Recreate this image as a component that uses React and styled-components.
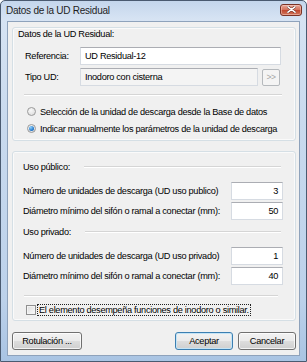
import React from 'react';
import styled, { createGlobalStyle } from 'styled-components';

const GlobalStyle = createGlobalStyle`
  html, body {
    margin: 0;
    padding: 0;
  }
  body {
    width: 307px;
    height: 362px;
    overflow: hidden;
    background: #ffffff;
    font-family: "Liberation Sans", Arial, sans-serif;
    font-size: 9.2px;
    letter-spacing: -0.3px;
    color: #000;
  }
`;

/* ---------- window frame ---------- */
const Window = styled.div`
  box-sizing: border-box;
  width: 307px;
  height: 362px;
  border: 1px solid #4a5a70;
  border-radius: 5px 5px 0 0;
  background: linear-gradient(#c4d6ec 0px, #d6e3f3 18px, #c9daee 120px, #bcd1ea 300px, #a9c4e3 100%);
  display: flex;
  flex-direction: column;
  padding: 0 6px 5px;
`;

const TitleBar = styled.div`
  height: 20px;
  display: flex;
  align-items: center;
  justify-content: space-between;
  margin: 0 -2px 0 -1px;
`;

const Title = styled.span`
  font-size: 10px;
  letter-spacing: -0.25px;
  color: #1e1e1e;
  padding-bottom: 1px;
`;

const CloseButton = styled.div`
  width: 22px;
  height: 12px;
  box-sizing: border-box;
  margin-top: -3px;
  border: 1px solid #7a3326;
  border-radius: 3px;
  background: linear-gradient(#e8a798 0%, #d6755f 45%, #c24a30 55%, #d0765c 100%);
  box-shadow: inset 0 0 0 1px rgba(255, 220, 210, 0.45);
  display: flex;
  align-items: center;
  justify-content: center;
`;

const Client = styled.div`
  flex: 1;
  background: #f0f0f0;
  border: 1px solid #8ea2bb;
  display: flex;
  flex-direction: column;
  padding: 5px 3px 0 4px;
`;

/* ---------- group panels ---------- */
const Group = styled.div`
  border: 1px solid #d5dfe5;
  border-radius: 3px;
  box-shadow: inset 0 0 0 1px #fafafa;
  display: flex;
  flex-direction: column;
  margin-top: ${p => p.$top || 0}px;
  padding-bottom: ${p => p.$bottom || 0}px;
`;

const GroupLabel = styled.div`
  line-height: 12px;
  height: 12px;
  padding-left: 5px;
`;

const SubHeader = styled.div`
  display: flex;
  align-items: center;
  line-height: 12px;
  height: 12px;
  margin-top: ${p => p.$top}px;
  padding: 0 14px 0 10px;

  &::after {
    content: "";
    flex: 1;
    margin-left: 14px;
    border-top: 1px solid #d5d5d5;
    border-bottom: 1px solid #ffffff;
  }
`;

const Separator = styled.div`
  height: 0;
  border-top: 1px solid #d5d5d5;
  border-bottom: 1px solid #ffffff;
  margin: ${p => p.$top}px ${p => p.$right}px 0 11px;
`;

/* ---------- rows and fields ---------- */
const FieldRow = styled.div`
  display: flex;
  align-items: center;
  height: 18px;
  margin-top: ${p => p.$top}px;
  padding-left: ${p => p.$indent || 12}px;
  padding-right: ${p => p.$right || 0}px;
`;

const FieldLabel = styled.span`
  width: ${p => (p.$w ? `${p.$w}px` : 'auto')};
  flex: ${p => (p.$w ? 'none' : 1)};
  white-space: nowrap;
`;

const TextBox = styled.div`
  box-sizing: border-box;
  width: ${p => p.$w}px;
  height: ${p => p.$h || 18}px;
  border: 1px solid #d6dbe2;
  border-top-color: #abadb3;
  background: ${p => (p.$readonly ? '#f4f4f4' : '#ffffff')};
  display: flex;
  align-items: center;
  justify-content: ${p => (p.$right ? 'flex-end' : 'flex-start')};
  padding: 0 4px;
  white-space: nowrap;
`;

const MiniButton = styled.div`
  box-sizing: border-box;
  width: 18px;
  height: 17px;
  margin-left: 4px;
  border: 1px solid #b5b9bd;
  border-radius: 2px;
  background: #f4f4f4;
  color: #a6a6a6;
  font-size: 8.5px;
  display: flex;
  align-items: center;
  justify-content: center;
  letter-spacing: -0.5px;
`;

const RadioList = styled.div`
  display: flex;
  flex-direction: column;
  margin-top: 7px;
  padding-left: 14px;
`;

const RadioRow = styled.div`
  display: flex;
  align-items: center;
  height: 17px;
  white-space: nowrap;
`;

const RadioDot = styled.span`
  box-sizing: border-box;
  width: 9px;
  height: 9px;
  border-radius: 50%;
  border: 1px solid #9a9a9a;
  background: radial-gradient(circle at 40% 35%, #f8f8f8, #d8d8d8);
  display: flex;
  align-items: center;
  justify-content: center;
  margin-right: 4px;

  &::after {
    content: "";
    display: ${p => (p.$checked ? 'block' : 'none')};
    width: 5px;
    height: 5px;
    border-radius: 50%;
    background: radial-gradient(circle at 35% 30%, #8fd3ff, #1c6fc4 70%);
  }
`;

const CheckRow = styled.div`
  display: flex;
  align-items: center;
  height: 16px;
  margin-top: 5px;
  padding-left: 13px;
  white-space: nowrap;
`;

const CheckBox = styled.span`
  box-sizing: border-box;
  width: 10px;
  height: 10px;
  border: 1px solid #8f8f8f;
  background: linear-gradient(135deg, #dcdcdc, #fbfbfb);
  box-shadow: inset 0 0 0 1px #f4f4f4;
  margin-right: 2px;
`;

const FocusText = styled.span`
  outline: 1px dotted #202020;
  outline-offset: 0;
  padding: 0 1px;
  line-height: 10px;
`;

/* ---------- bottom buttons ---------- */
const ButtonRow = styled.div`
  display: flex;
  align-items: center;
  margin-top: 11px;
  gap: 5px;
`;

const Spacer = styled.div`
  flex: 1;
`;

const Button = styled.button`
  box-sizing: border-box;
  width: ${p => p.$w}px;
  height: 18px;
  padding: 0;
  border: 1px solid ${p => (p.$primary ? '#3c7fb1' : '#707070')};
  border-radius: 3px;
  background: linear-gradient(#f2f2f2 0%, #ebebeb 48%, #dddddd 52%, #cfcfcf 100%);
  box-shadow: inset 0 0 0 1px ${p => (p.$primary ? '#c4e4f6' : 'rgba(255,255,255,0.75)')};
  font-family: "Liberation Sans", Arial, sans-serif;
  font-size: 9.2px;
  letter-spacing: -0.3px;
  color: #000;
`;

const CloseIcon = () => (
  <svg width="9" height="7" viewBox="0 0 9 7">
    <path d="M1 0.8 L8 6.2 M8 0.8 L1 6.2" stroke="#5a2219" strokeWidth="2.6" strokeLinecap="round" />
    <path d="M1 0.8 L8 6.2 M8 0.8 L1 6.2" stroke="#ffffff" strokeWidth="1.6" strokeLinecap="round" />
  </svg>
);

const numberRows = [
  { section: 'Uso público:', rows: [['Número de unidades de descarga (UD uso publico)', '3'], ['Diámetro mínimo del sifón o ramal a conectar (mm):', '50']] },
  { section: 'Uso privado:', rows: [['Número de unidades de descarga (UD uso privado)', '1'], ['Diámetro mínimo del sifón o ramal a conectar (mm):', '40']] },
];

export default function App() {
  return (
    <>
      <GlobalStyle />
      <Window>
        <TitleBar>
          <Title>Datos de la UD Residual</Title>
          <CloseButton><CloseIcon /></CloseButton>
        </TitleBar>
        <Client>
          <Group $bottom={3}>
            <GroupLabel>Datos de la UD Residual:</GroupLabel>
            <FieldRow $top={7} $indent={12}>
              <FieldLabel $w={55}>Referencia:</FieldLabel>
              <TextBox $w={201}>UD Residual-12</TextBox>
            </FieldRow>
            <FieldRow $top={3} $indent={12}>
              <FieldLabel $w={55}>Tipo UD:</FieldLabel>
              <TextBox $w={178} $readonly>Inodoro con cisterna</TextBox>
              <MiniButton>&gt;&gt;</MiniButton>
            </FieldRow>
            <Separator $top={8} $right={13} />
            <RadioList>
              <RadioRow>
                <RadioDot />
                Selección de la unidad de descarga desde la Base de datos
              </RadioRow>
              <RadioRow>
                <RadioDot $checked />
                Indicar manualmente los parámetros de la unidad de descarga
              </RadioRow>
            </RadioList>
          </Group>

          <Group $top={10} $bottom={2}>
            {numberRows.map((block, i) => (
              <React.Fragment key={block.section}>
                <SubHeader $top={i === 0 ? 9 : 6}>{block.section}</SubHeader>
                {block.rows.map(([label, value], j) => (
                  <FieldRow key={j} $top={j === 0 ? 9 : 2} $indent={10} $right={12}>
                    <FieldLabel>{label}</FieldLabel>
                    <TextBox $w={52} $right>{value}</TextBox>
                  </FieldRow>
                ))}
              </React.Fragment>
            ))}
            <Separator $top={10} $right={17} />
            <CheckRow>
              <CheckBox />
              <FocusText>El elemento desempeña funciones de inodoro o similar.</FocusText>
            </CheckRow>
          </Group>

          <ButtonRow>
            <Button $w={70}>Rotulación ...</Button>
            <Spacer />
            <Button $w={58} $primary>Aceptar</Button>
            <Button $w={58}>Cancelar</Button>
          </ButtonRow>
        </Client>
      </Window>
    </>
  );
}
